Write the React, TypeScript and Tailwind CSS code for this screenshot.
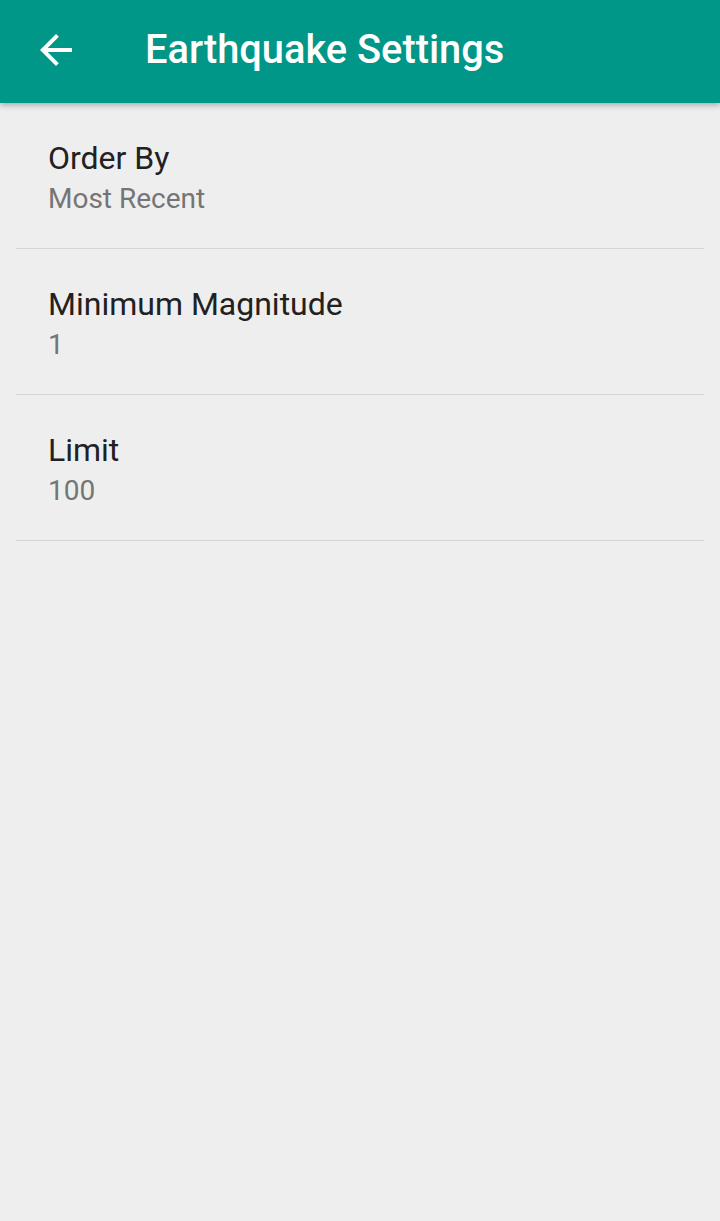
const prefs = [
  { title: "Order By", summary: "Most Recent" },
  { title: "Minimum Magnitude", summary: "1" },
  { title: "Limit", summary: "100" },
];

function Toolbar() {
  return (
    <header className="relative z-10 flex h-[103px] items-center bg-[#009688] shadow-[0_2px_6px_rgba(0,0,0,0.3)]">
      <div className="flex w-[145px] items-center pl-[32px]">
        <svg width="48" height="48" viewBox="0 0 24 24" className="-mt-[4px] fill-white">
          <path d="M20 11H7.83l5.59-5.59L12 4l-8 8 8 8 1.41-1.41L7.83 13H20v-2z" />
        </svg>
      </div>
      <h1 className="-mt-[4px] text-[39.8px] font-medium leading-none text-white">Earthquake Settings</h1>
    </header>
  );
}

export default function App() {
  return (
    <div className="min-h-[1221px] bg-[#eeeeee] font-['Roboto',sans-serif]">
      <Toolbar />
      <ul>
        {prefs.map((p) => (
          <li key={p.title} className="mx-4 border-b border-[#d5d5d5] px-8 pb-[31px] pt-[35px]">
            <div className="text-[32px] leading-[40px] text-[#212121]">{p.title}</div>
            <div className="mt-[3px] text-[28px] leading-[36px] text-[#757575]">{p.summary}</div>
          </li>
        ))}
      </ul>
    </div>
  );
}
